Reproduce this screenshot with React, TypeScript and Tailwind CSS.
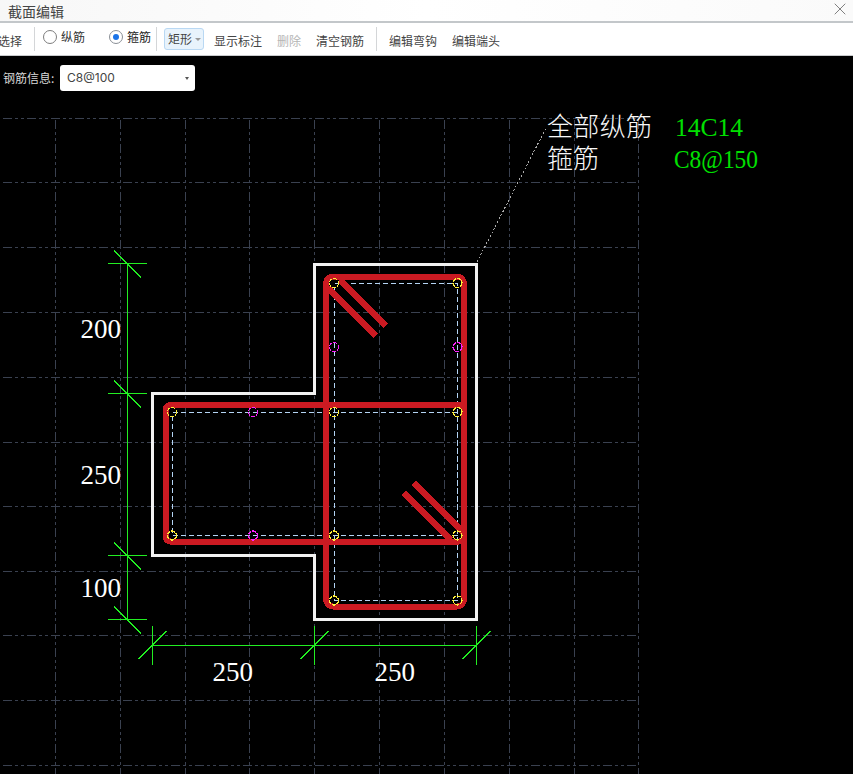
import React from 'react';
import { X } from 'lucide-react';

const gridXs = [55.5, 120.5, 185.5, 249.5, 314.5, 379.5, 444.5, 509.5, 574.5, 638.5];
const gridYs = [118.5, 182.5, 247.5, 312.5, 377.5, 442.5, 506.5, 571.5, 635.5, 700.5, 765.5];

const yellowPins = [
  [172, 412], [172, 535.5], [334, 283], [457.5, 283], [334, 412],
  [457.5, 412], [334, 535.5], [457.5, 535.5], [334, 600.5], [457.5, 600.5],
];
const magentaPins = [[253, 412], [253, 535.5], [334, 347], [457.5, 347]];

const dimTicksV = [263.5, 393.5, 555.5, 619.5];
const dimTicksH = [152.5, 314.5, 476.5];

const RED = '#cb1a22';
const GREEN = '#22ee22';
const DASH = '#b4d4f4';

function SectionDrawing() {
  return (
    <svg className="absolute inset-0" width="853" height="718" viewBox="0 56 853 718" shapeRendering="crispEdges">
      {/* background grid */}
      <g stroke="#3a4150" strokeWidth="1" strokeDasharray="9 3 3 3 3 3">
        {gridYs.map((y) => (
          <line key={y} x1="3" y1={y} x2="639" y2={y} />
        ))}
        {gridXs.map((x) => (
          <line key={x} x1={x} y1="120" x2={x} y2="774" />
        ))}
      </g>

      {/* dashed stirrup centre lines */}
      <g fill="none" stroke={DASH} strokeWidth="1" strokeDasharray="5 3">
        <rect x="334.5" y="283.5" width="123" height="317" />
        <rect x="172.5" y="412.5" width="285" height="123" />
      </g>

      {/* stirrups */}
      <g fill="none" stroke={RED} strokeWidth="6">
        <rect x="326" y="276.5" width="138" height="330" rx="7" />
        <rect x="165.5" y="405" width="298.5" height="136.5" rx="5" />
        <line x1="340" y1="280" x2="386" y2="326" />
        <line x1="328" y1="288" x2="376" y2="336" />
        <line x1="414" y1="483" x2="463" y2="532" />
        <line x1="404" y1="493" x2="451" y2="540" />
      </g>

      {/* rebar pins */}
      <g fill="none" strokeWidth="1.2" strokeDasharray="4 1">
        {yellowPins.map(([x, y]) => (
          <circle key={`${x}-${y}`} cx={x} cy={y} r="4.5" stroke="#fff03a" />
        ))}
        {magentaPins.map(([x, y]) => (
          <circle key={`${x}-${y}`} cx={x} cy={y} r="4.5" stroke="#ff22ff" />
        ))}
      </g>

      {/* concrete outline */}
      <polygon
        points="314.5,264 476.5,264 476.5,619 314.5,619 314.5,555 152.5,555 152.5,393.5 314.5,393.5"
        fill="none"
        stroke="#f2f2f2"
        strokeWidth="3"
      />

      {/* leader */}
      <line x1="477" y1="262" x2="546" y2="128" stroke="#aaaaaa" strokeWidth="1" strokeDasharray="2 2" />

      {/* dimensions */}
      <g stroke={GREEN} strokeWidth="1">
        <line x1="127.5" y1="263.5" x2="127.5" y2="619" />
        {dimTicksV.map((y) => (
          <g key={y}>
            <line x1="108" y1={y} x2="147" y2={y} />
            <line x1="114" y1={y - 13} x2="141" y2={y + 14} />
          </g>
        ))}
        <line x1="152.5" y1="645.5" x2="476.5" y2="645.5" />
        {dimTicksH.map((x) => (
          <g key={x}>
            <line x1={x} y1="626" x2={x} y2="665" />
            <line x1={x - 14} y1="659" x2={x + 14} y2="631" />
          </g>
        ))}
      </g>

      <g fill="#ffffff" fontSize="27" fontFamily="'Liberation Serif', serif">
        <text x="80.5" y="338">200</text>
        <text x="80.5" y="484">250</text>
        <text x="80.5" y="597">100</text>
        <text x="212.5" y="681">250</text>
        <text x="374.5" y="681">250</text>
      </g>
      <g fill="#f8f8f8" fontSize="26" fontFamily="'Noto Sans CJK SC', sans-serif" fontWeight="300">
        <text x="547" y="136" textLength="105" lengthAdjust="spacing">全部纵筋</text>
        <text x="547" y="168" textLength="52" lengthAdjust="spacing">箍筋</text>
      </g>
      <g fill="#00e000" fontSize="26" fontFamily="'Liberation Serif', serif">
        <text x="675" y="136" textLength="68" lengthAdjust="spacingAndGlyphs">14C14</text>
        <text x="674" y="168" textLength="84" lengthAdjust="spacingAndGlyphs">C8@150</text>
      </g>
    </svg>
  );
}

function Radio({ label, checked, className }: { label: string; checked?: boolean; className?: string }) {
  return (
    <div className={`flex items-center gap-1 -mt-1 ${className ?? ''}`}>
      <span
        className={`w-[14px] h-[14px] rounded-full border flex items-center justify-center bg-white ${
          checked ? 'border-[#8a8f96]' : 'border-[#7d7d7d]'
        }`}
      >
        {checked && <span className="w-[6px] h-[6px] rounded-full bg-[#1a73e8]" />}
      </span>
      <span className={`leading-none ${checked ? 'text-[#222]' : 'text-[#333]'}`}>{label}</span>
    </div>
  );
}

function Sep({ className }: { className?: string }) {
  return <div className={`w-px h-[24px] bg-[#d4d6d8] ${className ?? ''}`} />;
}

export default function App() {
  return (
    <div className="w-[853px] h-[774px] overflow-hidden flex flex-col font-['Noto_Sans_CJK_SC',sans-serif]">
      {/* Title bar */}
      <div className="h-[21px] shrink-0 flex items-center justify-between pl-2 pr-[3px] bg-gradient-to-r from-[#f7f7f7] via-white to-[#fafafa]">
        <span className="text-[14px] leading-none text-[#444]">截面编辑</span>
        <X size={20} strokeWidth={1.2} className="text-[#808080] -mt-[3px]" />
      </div>
      <div className="h-[2px] shrink-0 bg-[#c3c7ca]" />

      {/* Toolbar */}
      <div className="h-[33px] shrink-0 flex items-center text-[12px] text-[#444] bg-white border-b border-[#c9cbcd]">
        <span className="-ml-[2px] mt-[3px]">选择</span>
        <Sep className="ml-[12px]" />
        <Radio label="纵筋" className="ml-[8px]" />
        <Radio label="箍筋" checked className="ml-[24px]" />
        <Sep className="ml-[5px]" />
        <div className="ml-[7px] w-[40px] h-[22px] flex items-center justify-between pl-[3px] pr-[2px] rounded-[3px] border border-[#b9d8f3] bg-[#e8f3fc]">
          <span>矩形</span>
          <span className="w-0 h-0 border-x-[3px] border-x-transparent border-t-[3px] border-t-[#999]" />
        </div>
        <span className="ml-[10px] mt-[3px]">显示标注</span>
        <span className="ml-[15px] mt-[3px] text-[#b5b5b5]">删除</span>
        <span className="ml-[15px] mt-[3px]">清空钢筋</span>
        <Sep className="ml-[12px]" />
        <span className="ml-[12px] mt-[3px]">编辑弯钩</span>
        <span className="ml-[15px] mt-[3px]">编辑端头</span>
      </div>

      {/* Canvas */}
      <div className="relative flex-1 bg-black">
        <SectionDrawing />
        <div className="relative flex items-center pt-[9px] pl-[3px] text-[12px]">
          <span className="w-[57px] text-[#d8d8d8]">钢筋信息:</span>
          <div className="w-[135px] h-[26px] flex items-center justify-between pl-[7px] pr-[6px] rounded-[3px] bg-white text-[#444] font-['Inter',sans-serif]">
            <span>C8@100</span>
            <span className="w-0 h-0 border-x-[2.5px] border-x-transparent border-t-[3px] border-t-[#555]" />
          </div>
        </div>
      </div>
    </div>
  );
}
